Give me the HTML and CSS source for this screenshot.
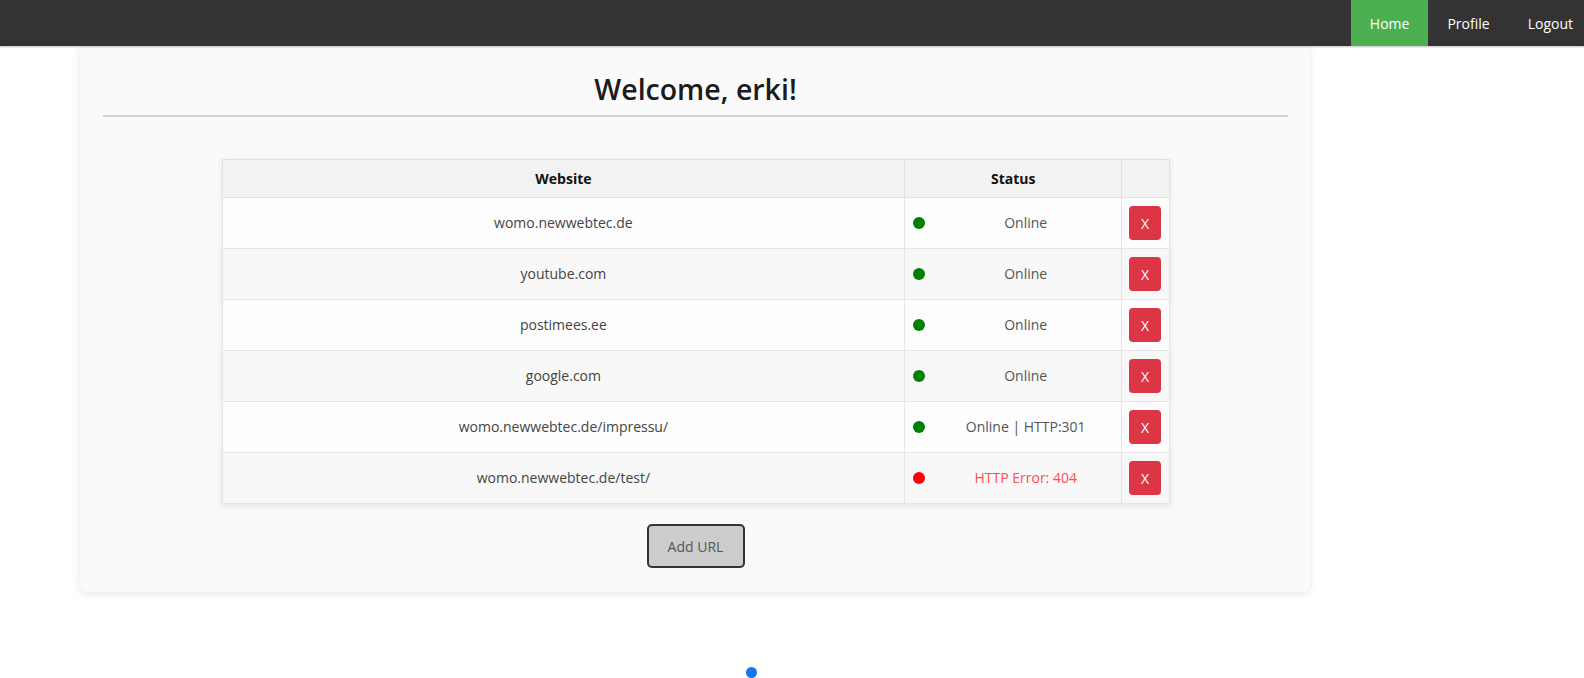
FILE: index.html
```html
<!DOCTYPE html>
<html lang="en">
<head>
<meta charset="utf-8">
<title>Dashboard</title>
<link rel="stylesheet" href="styles.css">
</head>
<body>
<nav class="topnav">
  <ul class="nav-list">
    <li><a class="nav-link active" href="#">Home</a></li>
    <li><a class="nav-link" href="#">Profile</a></li>
    <li><a class="nav-link last" href="#">Logout</a></li>
  </ul>
</nav>
<main class="card">
  <h1 class="welcome">Welcome, erki!</h1>
  <table class="sites">
    <colgroup>
      <col class="col-site">
      <col class="col-status">
      <col class="col-action">
    </colgroup>
    <thead>
      <tr><th>Website</th><th>Status</th><th></th></tr>
    </thead>
    <tbody>
      <tr>
        <td class="site">womo.newwebtec.de</td>
        <td><div class="status"><span class="dot ok"></span><span class="status-text">Online</span></div></td>
        <td class="action"><button class="del-btn">X</button></td>
      </tr>
      <tr>
        <td class="site">youtube.com</td>
        <td><div class="status"><span class="dot ok"></span><span class="status-text">Online</span></div></td>
        <td class="action"><button class="del-btn">X</button></td>
      </tr>
      <tr>
        <td class="site">postimees.ee</td>
        <td><div class="status"><span class="dot ok"></span><span class="status-text">Online</span></div></td>
        <td class="action"><button class="del-btn">X</button></td>
      </tr>
      <tr>
        <td class="site">google.com</td>
        <td><div class="status"><span class="dot ok"></span><span class="status-text">Online</span></div></td>
        <td class="action"><button class="del-btn">X</button></td>
      </tr>
      <tr>
        <td class="site">womo.newwebtec.de/impressu/</td>
        <td><div class="status"><span class="dot ok"></span><span class="status-text">Online | HTTP:301</span></div></td>
        <td class="action"><button class="del-btn">X</button></td>
      </tr>
      <tr>
        <td class="site">womo.newwebtec.de/test/</td>
        <td><div class="status"><span class="dot err"></span><span class="status-text error">HTTP Error: 404</span></div></td>
        <td class="action"><button class="del-btn">X</button></td>
      </tr>
    </tbody>
  </table>
  <div class="actions"><button class="add-btn">Add URL</button></div>
</main>
<div class="loader-dot"></div>
</body>
</html>
```

FILE: styles.css
```css
html, body {
  margin: 0;
  padding: 0;
  overflow: hidden;
}
body {
  background: #ffffff;
  font-family: "Open Sans", "Noto Sans", sans-serif;
  color: #333;
}
.topnav {
  background: #333333;
  height: 46px;
  box-shadow: 0 1px 2px rgba(0,0,0,0.25);
  position: relative;
  z-index: 1;
}
.nav-list {
  list-style: none;
  margin: 0;
  padding: 0;
  display: flex;
  justify-content: flex-end;
  height: 100%;
}
.nav-link {
  display: flex;
  align-items: center;
  height: 46px;
  padding: 0 19px;
  color: #ffffff;
  text-decoration: none;
  font-size: 14px;
}
.nav-link.active {
  background: #4caf50;
}
.nav-link.last {
  padding-right: 11px;
}
.card {
  display: block;
  margin-left: 80px;
  width: 1230px;
  box-sizing: border-box;
  padding: 22px 22px 24px 23px;
  background: #fafafa;
  border-radius: 0 0 8px 8px;
  box-shadow: 0 2px 8px rgba(0,0,0,0.1);
}
.welcome {
  margin: 0;
  text-align: center;
  font-size: 28.5px;
  font-weight: 600;
  line-height: 40px;
  color: #1b1b1b;
  padding-top: 1px;
  padding-bottom: 6px;
  border-bottom: 2px solid #d4d4d4;
}
.sites {
  width: 80%;
  margin: 42px auto 0;
  border-collapse: collapse;
  table-layout: fixed;
  font-size: 14px;
  box-shadow: 0 2px 6px rgba(0,0,0,0.1);
}
.col-site { width: 72.1%; }
.col-status { width: 22.9%; }
.col-action { width: 5%; }
.sites th {
  background: #f2f2f2;
  border: 1px solid #e2e2e2;
  padding: 9px 8px;
  line-height: 19px;
  font-weight: 700;
  color: #111;
  text-align: center;
}
.sites td {
  border: 1px solid #e6e6e6;
  padding: 8px;
  line-height: 34px;
  text-align: center;
  color: #444;
}
.sites tbody tr:nth-child(odd) td { background: #fdfdfd; }
.sites tbody tr:nth-child(even) td { background: #f8f8f8; }
.status {
  display: flex;
  align-items: center;
}
.dot {
  width: 12px;
  height: 12px;
  border-radius: 50%;
  flex: none;
}
.dot.ok { background: #008000; }
.dot.err { background: #ff0000; }
.status-text {
  flex: 1;
  text-align: center;
  margin-left: 13px;
  color: #555;
}
.status-text.error { color: #ff4d4d; }
.sites td.action {
  padding: 8px 7px;
}
.del-btn {
  display: block;
  width: 32px;
  height: 34px;
  border: none;
  border-radius: 4px;
  background: #dc3545;
  color: #fff;
  font-family: inherit;
  font-size: 14px;
  padding: 0;
}
.actions {
  display: flex;
  justify-content: center;
  margin-top: 20px;
}
.add-btn {
  width: 98px;
  height: 44px;
  background: #cccccc;
  border: 2px solid #333;
  border-radius: 5px;
  color: #555;
  font-family: inherit;
  font-size: 14px;
}
.loader-dot {
  width: 11px;
  height: 11px;
  border-radius: 50%;
  background: #1a73e8;
  margin: 75px 0 0 746px;
}
```
